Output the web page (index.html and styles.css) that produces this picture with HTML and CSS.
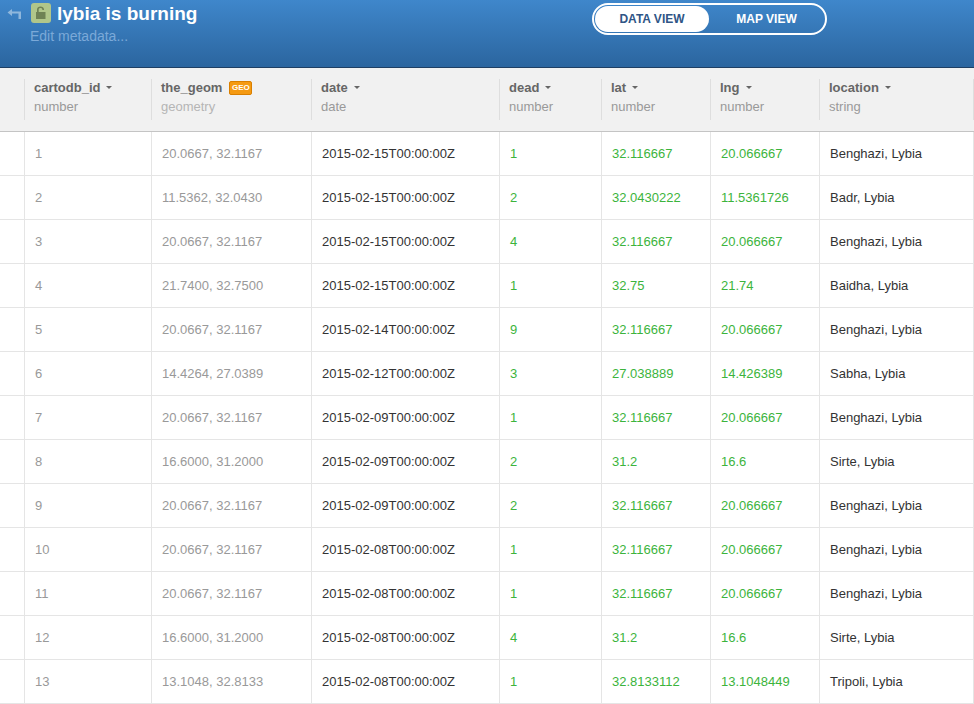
FILE: index.html
```html
<!DOCTYPE html>
<html lang="en">
<head>
<meta charset="utf-8">
<title>lybia is burning</title>
<link rel="stylesheet" href="styles.css">
</head>
<body>
<header class="topbar">
  <div class="title-area">
    <svg class="back" width="16" height="12" viewBox="0 0 16 12"><path d="M6 1 1.5 4.5 6 8V5.6h6.5V11H15V3.4H6z" fill="#8fb7dc"/></svg>
    <div class="lock"><svg width="12" height="14" viewBox="0 0 12 14"><path d="M2 6V3.6C2 1.6 3.6.6 5.5.6S9 1.6 9 3.6V4H7.3v-.4c0-1-.7-1.5-1.8-1.5s-1.8.5-1.8 1.5V6H10.500v7H1V6z" fill="#6f8255"/></svg></div>
    <div class="title-text">
      <h1 class="title">lybia is burning</h1>
      <a class="meta">Edit metadata...</a>
    </div>
  </div>
  <div class="switch">
    <span class="tab tab-active">DATA VIEW</span>
    <span class="tab">MAP VIEW</span>
  </div>
</header>
<table class="grid">
  <colgroup>
    <col class="c0"><col class="c1"><col class="c2"><col class="c3"><col class="c4"><col class="c5"><col class="c6"><col class="c7"><col>
  </colgroup>
  <thead>
    <tr>
      <th></th>
      <th><div class="name">cartodb_id<i class="caret"></i></div><div class="type">number</div></th>
      <th><div class="name">the_geom<span class="geo">GEO</span></div><div class="type type-light">geometry</div></th>
      <th><div class="name">date<i class="caret"></i></div><div class="type">date</div></th>
      <th><div class="name">dead<i class="caret"></i></div><div class="type">number</div></th>
      <th><div class="name">lat<i class="caret"></i></div><div class="type">number</div></th>
      <th><div class="name">lng<i class="caret"></i></div><div class="type">number</div></th>
      <th><div class="name">location<i class="caret"></i></div><div class="type">string</div></th>
      <th></th>
    </tr>
  </thead>
  <tbody>
    <tr><td></td><td class="id">1</td><td class="id">20.0667, 32.1167</td><td>2015-02-15T00:00:00Z</td><td class="num">1</td><td class="num">32.116667</td><td class="num">20.066667</td><td>Benghazi, Lybia</td><td></td></tr>
    <tr><td></td><td class="id">2</td><td class="id">11.5362, 32.0430</td><td>2015-02-15T00:00:00Z</td><td class="num">2</td><td class="num">32.0430222</td><td class="num">11.5361726</td><td>Badr, Lybia</td><td></td></tr>
    <tr><td></td><td class="id">3</td><td class="id">20.0667, 32.1167</td><td>2015-02-15T00:00:00Z</td><td class="num">4</td><td class="num">32.116667</td><td class="num">20.066667</td><td>Benghazi, Lybia</td><td></td></tr>
    <tr><td></td><td class="id">4</td><td class="id">21.7400, 32.7500</td><td>2015-02-15T00:00:00Z</td><td class="num">1</td><td class="num">32.75</td><td class="num">21.74</td><td>Baidha, Lybia</td><td></td></tr>
    <tr><td></td><td class="id">5</td><td class="id">20.0667, 32.1167</td><td>2015-02-14T00:00:00Z</td><td class="num">9</td><td class="num">32.116667</td><td class="num">20.066667</td><td>Benghazi, Lybia</td><td></td></tr>
    <tr><td></td><td class="id">6</td><td class="id">14.4264, 27.0389</td><td>2015-02-12T00:00:00Z</td><td class="num">3</td><td class="num">27.038889</td><td class="num">14.426389</td><td>Sabha, Lybia</td><td></td></tr>
    <tr><td></td><td class="id">7</td><td class="id">20.0667, 32.1167</td><td>2015-02-09T00:00:00Z</td><td class="num">1</td><td class="num">32.116667</td><td class="num">20.066667</td><td>Benghazi, Lybia</td><td></td></tr>
    <tr><td></td><td class="id">8</td><td class="id">16.6000, 31.2000</td><td>2015-02-09T00:00:00Z</td><td class="num">2</td><td class="num">31.2</td><td class="num">16.6</td><td>Sirte, Lybia</td><td></td></tr>
    <tr><td></td><td class="id">9</td><td class="id">20.0667, 32.1167</td><td>2015-02-09T00:00:00Z</td><td class="num">2</td><td class="num">32.116667</td><td class="num">20.066667</td><td>Benghazi, Lybia</td><td></td></tr>
    <tr><td></td><td class="id">10</td><td class="id">20.0667, 32.1167</td><td>2015-02-08T00:00:00Z</td><td class="num">1</td><td class="num">32.116667</td><td class="num">20.066667</td><td>Benghazi, Lybia</td><td></td></tr>
    <tr><td></td><td class="id">11</td><td class="id">20.0667, 32.1167</td><td>2015-02-08T00:00:00Z</td><td class="num">1</td><td class="num">32.116667</td><td class="num">20.066667</td><td>Benghazi, Lybia</td><td></td></tr>
    <tr><td></td><td class="id">12</td><td class="id">16.6000, 31.2000</td><td>2015-02-08T00:00:00Z</td><td class="num">4</td><td class="num">31.2</td><td class="num">16.6</td><td>Sirte, Lybia</td><td></td></tr>
    <tr><td></td><td class="id">13</td><td class="id">13.1048, 32.8133</td><td>2015-02-08T00:00:00Z</td><td class="num">1</td><td class="num">32.8133112</td><td class="num">13.1048449</td><td>Tripoli, Lybia</td><td></td></tr>
  </tbody>
</table>
</body>
</html>
```
FILE: styles.css
```css
html, body {
  margin: 0;
  padding: 0;
  height: 704px;
  overflow: hidden;
  background: #fff;
}
body {
  font-family: "Liberation Sans", Arial, sans-serif;
  font-size: 13px;
  color: #333;
}
.topbar {
  height: 67px;
  border-bottom: 1px solid #1e3f63;
  background: linear-gradient(#3f87cb, #2b659f);
  display: flex;
  align-items: flex-start;
  position: relative;
}
.title-area {
  display: flex;
  align-items: flex-start;
  padding: 3px 0 0 6px;
  width: 586px;
  flex: none;
  box-sizing: border-box;
}
.back { margin-top: 5px; flex: none; }
.lock {
  width: 20px;
  height: 20px;
  margin-left: 9px;
  background: #b0c68a;
  border-radius: 3px;
  display: flex;
  align-items: center;
  justify-content: center;
  flex: none;
}
.title-text { margin-left: 6px; }
.title {
  margin: 0;
  font-size: 19px;
  line-height: 21px;
  font-weight: bold;
  color: #fff;
}
.meta {
  display: block;
  margin: 4px 0 0 -27px;
  font-size: 14px;
  line-height: 17px;
  color: #7ba9d8;
}
.switch {
  margin: 3px 0 0 6px;
  width: 235px;
  height: 32px;
  box-sizing: border-box;
  border: 2px solid #fff;
  border-radius: 16px;
  display: flex;
  padding: 1px;
}
.tab {
  flex: 1;
  text-align: center;
  font-size: 12px;
  font-weight: bold;
  line-height: 26px;
  color: #fff;
}
.tab-active {
  flex: none;
  width: 114px;
  background: #fff;
  color: #2f5586;
  border-radius: 13px;
}
.grid {
  border-collapse: separate;
  border-spacing: 0;
  table-layout: fixed;
  width: 974px;
}
.c0 { width: 25px; }
.c1 { width: 127px; }
.c2 { width: 160px; }
.c3 { width: 188px; }
.c4 { width: 102px; }
.c5 { width: 109px; }
.c6 { width: 109px; }
.c7 { width: 154px; }
th {
  height: 64px;
  padding: 11px 0 0 9px;
  box-sizing: border-box;
  background: #f1f1f1;
  border-bottom: 1px solid #c4c4c4;
  text-align: left;
  vertical-align: top;
  font-weight: normal;
  background-clip: padding-box;
}
th + th { position: relative; }
th:not(:first-child):not(:last-child)::before {
  content: "";
  position: absolute;
  left: -1px;
  top: 11px;
  bottom: 11px;
  width: 1px;
  background: #dedede;
}
th:last-child::before {
  content: "";
  position: absolute;
  left: -1px;
  top: 11px;
  bottom: 11px;
  width: 1px;
  background: #dedede;
}
.name {
  font-size: 13px;
  line-height: 17px;
  font-weight: bold;
  color: #666;
  display: flex;
  align-items: center;
}
.type {
  margin-top: 2px;
  font-size: 13px;
  line-height: 17px;
  color: #999;
}
.type-light { color: #b5b5b5; }
.caret {
  margin-left: 6px;
  width: 0;
  height: 0;
  border-left: 3px solid transparent;
  border-right: 3px solid transparent;
  border-top: 3px solid #666;
}
.geo {
  margin-left: 7px;
  width: 23px;
  height: 14px;
  box-sizing: border-box;
  background: #f59a12;
  border: 1px solid #d97f00;
  border-radius: 2px;
  color: #fff;
  font-size: 8px;
  line-height: 12px;
  text-align: center;
  font-weight: bold;
}
td {
  height: 44px;
  box-sizing: border-box;
  padding: 0 0 0 10px;
  border-bottom: 1px solid #e5e5e5;
  border-right: 1px solid #e5e5e5;
  font-size: 13px;
  white-space: nowrap;
  color: #333;
}
td:first-child { padding: 0; }
td:last-child { border-right: 0; }
td.id { color: #999; }
td.num { color: #3cb43c; }
```
